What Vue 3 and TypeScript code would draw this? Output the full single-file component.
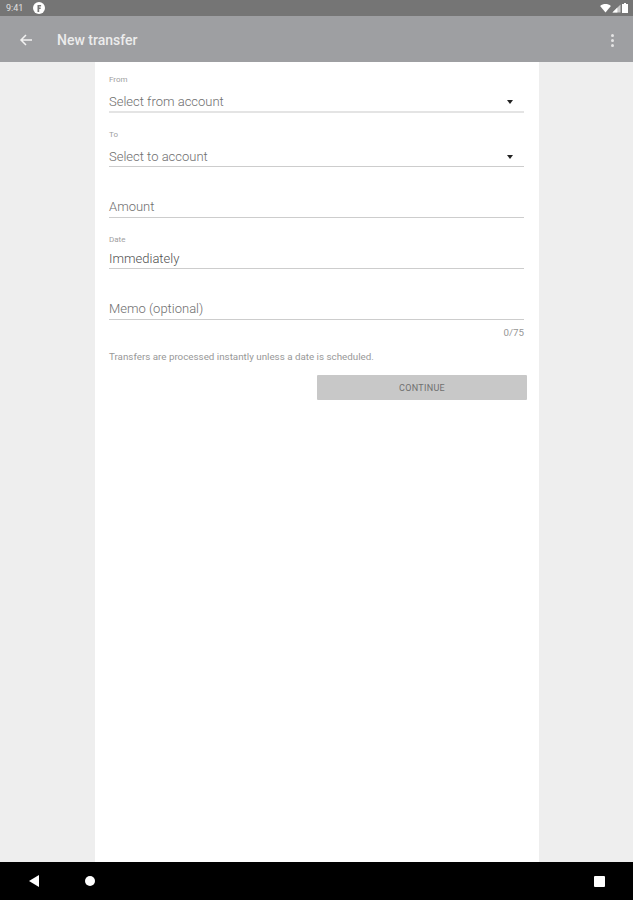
<template>
  <div class="screen">
    <div class="status-bar">
      <span class="time">9:41</span>
      <span class="status-badge">
        <svg viewBox="0 0 12 12" width="12" height="12"><circle cx="6" cy="6" r="6" fill="#fff" /><path d="M4.5 3h3.6v1.6H6.2v1h1.5v1.5H6.2V10H4.5z" fill="#757575" /></svg>
      </span>
      <span class="status-icons">
        <svg viewBox="0 0 12 10" width="11" height="9"><path d="M0 2.2C3.400-.7 8.600-.7 12 2.200L6 9.500z" fill="#fff" /></svg>
        <svg viewBox="0 0 10 10" width="9" height="9"><path d="M9.500.5v9H.5z" fill="#c9c9c9" /><path d="M6 4v5.500H.5z" fill="#fff" /></svg>
        <svg viewBox="0 0 6 10" width="6" height="10"><path d="M2 0h2v1h2v9H0V1h2z" fill="#fff" /></svg>
      </span>
    </div>

    <header class="app-bar">
      <svg class="back" viewBox="0 0 14 14" width="14" height="14"><path d="M13 7H2.500M7 2 2 7l5 5" fill="none" stroke="#f2f2f2" stroke-width="1.500" /></svg>
      <h1 class="title">New transfer</h1>
      <span class="more"><i /><i /><i /></span>
    </header>

    <main class="content">
      <form class="sheet" @submit.prevent>
        <div v-for="f in fields" :key="f.id" class="field" :class="f.cls">
          <label v-if="f.label" class="label">{{ f.label }}</label>
          <div class="value-row">
            <span class="value" :class="{ dark: f.id === 'date' }">{{ f.value }}</span>
            <span v-if="f.select" class="caret" />
          </div>
        </div>
        <div class="counter">0/75</div>
        <p class="help">Transfers are processed instantly unless a date is scheduled.</p>
        <div class="actions">
          <button class="continue" type="button" disabled>CONTINUE</button>
        </div>
      </form>
    </main>

    <footer class="nav-bar">
      <svg class="nav-back" viewBox="0 0 12 14" width="12" height="14"><path d="M11 1v12L1 7z" fill="#fff" /></svg>
      <span class="nav-home" />
      <span class="nav-recent" />
    </footer>
  </div>
</template>

<script setup lang="ts">
interface Field {
  id: string
  label?: string
  value: string
  select?: boolean
  cls: string
}

const fields: Field[] = [
  { id: 'from', label: 'From', value: 'Select from account', select: true, cls: 'first thick' },
  { id: 'to', label: 'To', value: 'Select to account', select: true, cls: '' },
  { id: 'amount', value: 'Amount', cls: 'plain' },
  { id: 'date', label: 'Date', value: 'Immediately', cls: 'date' },
  { id: 'memo', value: 'Memo (optional)', cls: 'plain' },
]
</script>

<style>
html, body { margin: 0; padding: 0; }
</style>

<style scoped>
.screen {
  width: 633px; height: 900px; display: flex; flex-direction: column;
  font-family: Roboto, "Liberation Sans", sans-serif; background: #eee; overflow: hidden;
}
.status-bar {
  height: 16px; flex: none; display: flex; align-items: center;
  background: #757575; color: #e0e0e0; padding: 0 5px 0 6px; font-size: 9px;
}
.time { width: 27px; }
.status-badge { display: flex; }
.status-icons { margin-left: auto; display: flex; align-items: center; gap: 1px; }

.app-bar {
  height: 46px; flex: none; display: flex; align-items: center; box-sizing: border-box;
  background: #9e9fa2; color: #ececec; padding: 2px 19px 0 19px;
}
.title { margin: 0 0 0 24px; font-size: 14px; font-weight: 500; }
.more { margin-left: auto; display: flex; flex-direction: column; gap: 2px; }
.more i { width: 3px; height: 3px; border-radius: 50%; background: #e4e4e4; }

.content { flex: 1; min-height: 0; display: flex; justify-content: center; padding-left: 1px; box-sizing: border-box; }
.sheet { width: 444px; background: #fff; padding: 0 12px 0 14px; box-sizing: border-box; }

.field { border-bottom: 1px solid #cdcdcd; margin-right: 3px; }
.first { margin-top: 13px; }
.thick { border-bottom: 2px solid #e4e4e4; }
.field:not(.first) { margin-top: 17px; }
.field.plain { margin-top: 30px; }
.field.date { margin-top: 17px; }
.label { display: block; font-size: 8px; line-height: 10px; color: #a0a0a0; }
.value-row { display: flex; align-items: center; justify-content: space-between; height: 19px; margin-top: 7px; padding-right: 11px; }
.plain .value-row { margin-top: 0; padding-bottom: 1px; }
.date .value-row { margin-top: 4px; }
.value { font-size: 13px; font-weight: 300; color: #6e6e6e; }
.value.dark { color: #505050; }
.caret { width: 0; height: 0; border: 3px solid transparent; border-top: 4px solid #222; border-bottom: 0; }

.counter { margin: 7px 3px 0 0; text-align: right; font-size: 9.750px; line-height: 12px; color: #969696; }
.help { margin: 12px 0 0; font-size: 9.800px; line-height: 12px; color: #989898; }
.actions { display: flex; justify-content: flex-end; margin-top: 12px; }
.continue {
  width: 210px; height: 25px; border: 0; border-radius: 1px; background: #c8c8c8;
  color: #707070; font: 400 9px Roboto, "Liberation Sans", sans-serif; letter-spacing: .3px; padding: 0;
}

.nav-bar {
  height: 38px; flex: none; display: flex; align-items: center; background: #000; padding: 0 28px;
}
.nav-back { margin-right: 45px; }
.nav-home { width: 10px; height: 10px; border-radius: 50%; background: #fff; }
.nav-recent { width: 11px; height: 11px; margin-left: auto; border-radius: 1px; background: #fff; }
</style>
